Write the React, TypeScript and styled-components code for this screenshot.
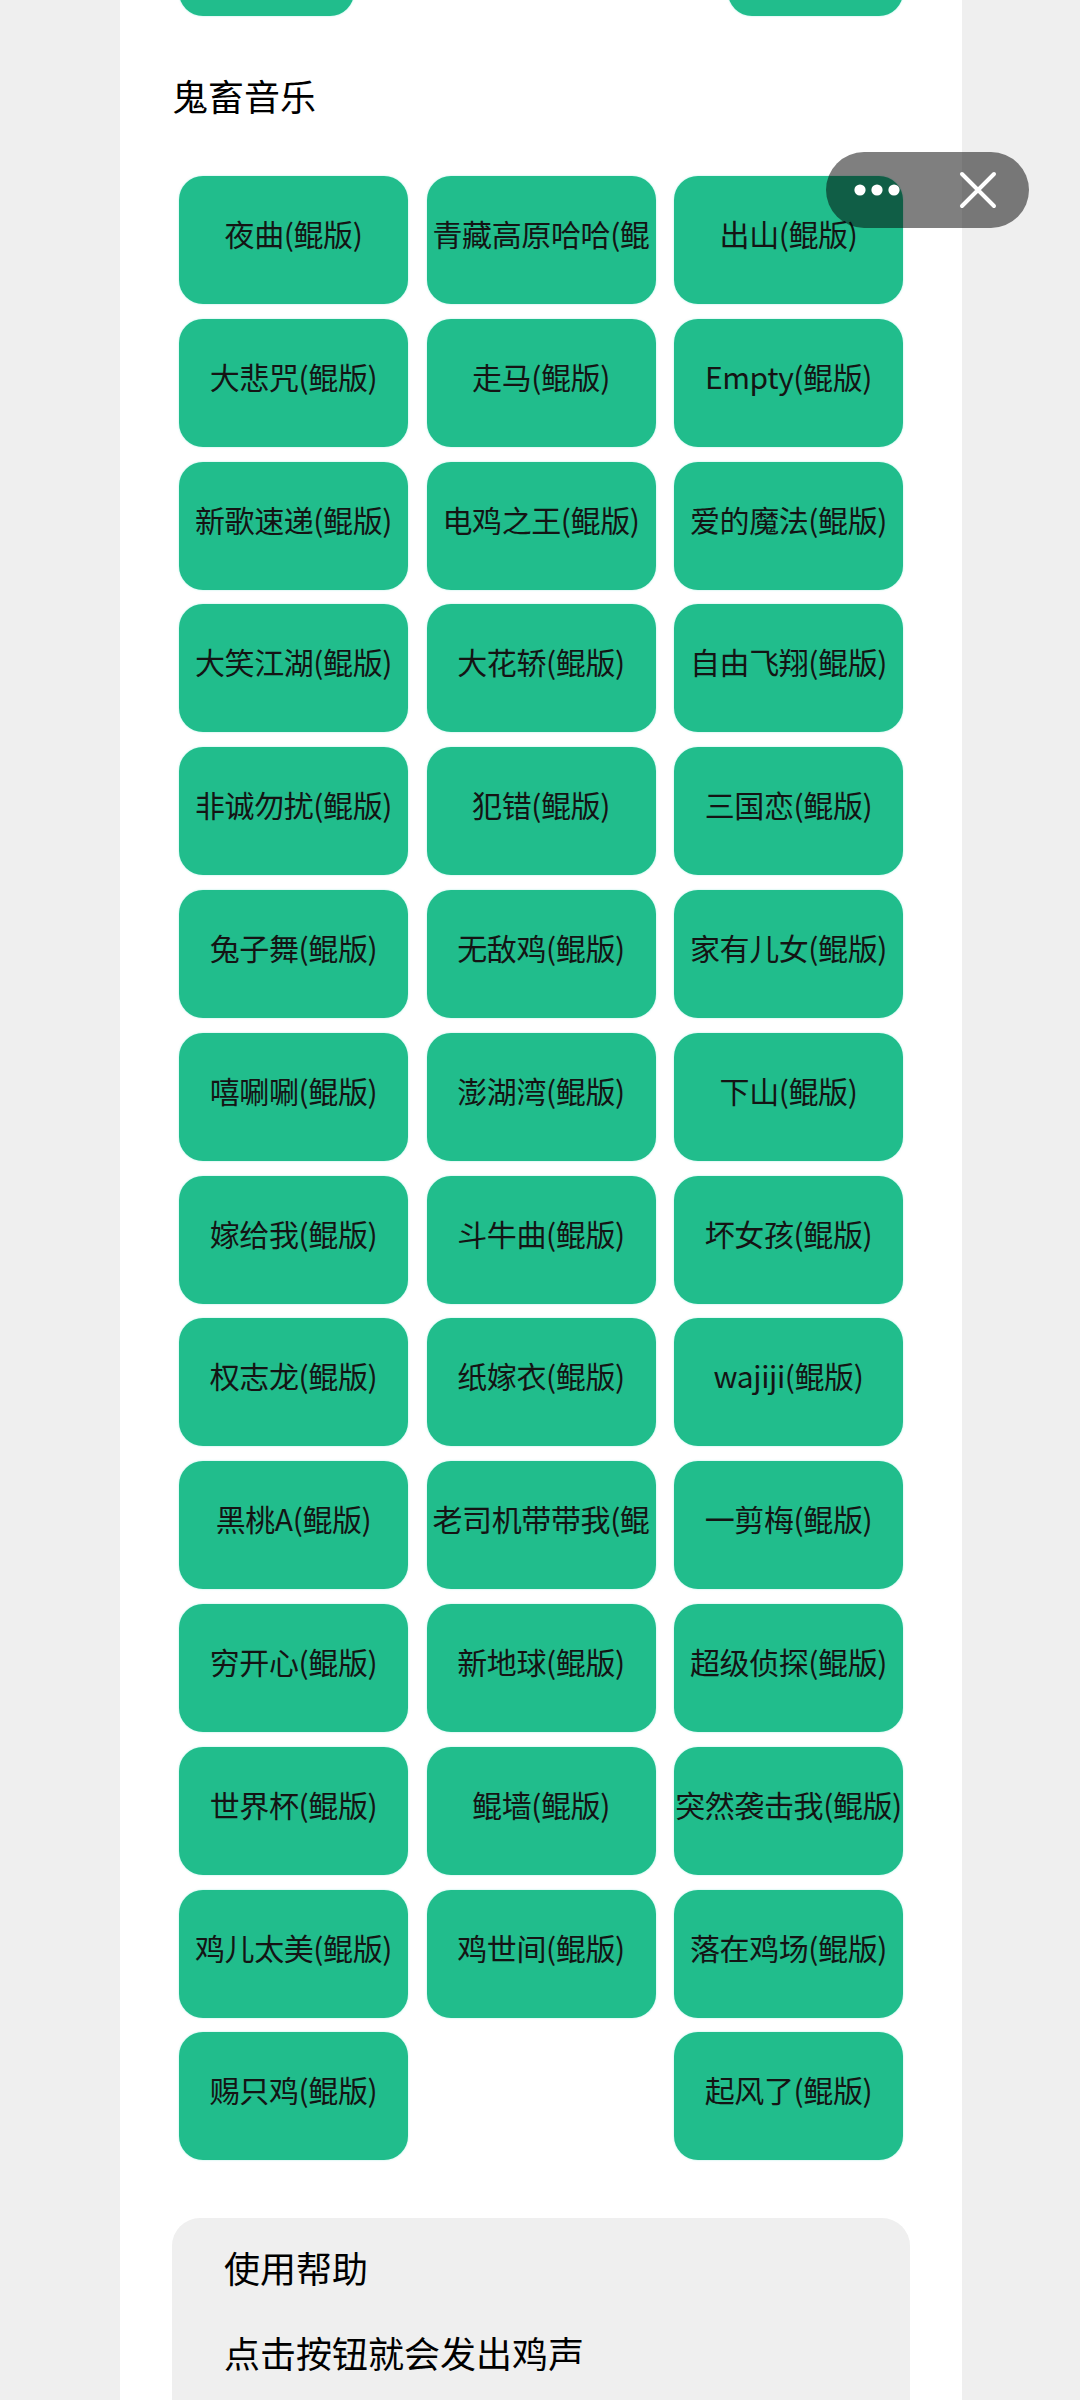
import React from "react";
import styled, { createGlobalStyle } from "styled-components";

const GlobalStyle = createGlobalStyle`
  html, body {
    margin: 0;
    padding: 0;
    background: #efefef;
    overflow: hidden;
  }
  body {
    font-family: "Noto Sans CJK SC", "Noto Sans", sans-serif;
    color: #111;
  }
`;

const Screen = styled.div`
  width: 1080px;
  height: 2400px;
  overflow: hidden;
  background: #efefef;
`;

const Panel = styled.main`
  width: 842px;
  margin: -112px 0 0 120px;
  background: #ffffff;
  padding: 0 52px 200px;
  box-sizing: border-box;
`;

const ButtonList = styled.div`
  display: flex;
  flex-wrap: wrap;
  justify-content: space-between;
  row-gap: 14.8px;
  margin: 0 7px;
`;

const SoundButton = styled.button<{ $w: number }>`
  display: block;
  width: ${(p) => p.$w}px;
  height: 128px;
  border: none;
  padding: 0;
  margin: 0;
  background: #21bd8c;
  border-radius: 24px;
  box-shadow: 0 0 2px rgba(90, 225, 200, 0.55);
  overflow: hidden;
  cursor: pointer;
`;

const Label = styled.span`
  display: block;
  height: 128px;
  overflow: hidden;
  color: #141414;
  font-family: "Noto Sans CJK SC", "Noto Sans", sans-serif;
  font-size: 30px;
  letter-spacing: -0.4px;
  line-height: 114px;
  text-align: center;
  white-space: normal;
`;

const SectionTitle = styled.h2`
  margin: 52px 0 54px;
  font-size: 36px;
  line-height: 54px;
  font-weight: 400;
  color: #000;
`;

const HelpCard = styled.section`
  margin-top: 58px;
  background: #efefef;
  border-radius: 28px;
  padding: 22px 52px 80px;
`;

const HelpTitle = styled.div`
  font-size: 36px;
  line-height: 54px;
  color: #000;
`;

const HelpText = styled.div`
  margin-top: 31px;
  font-size: 36px;
  line-height: 54px;
  color: #000;
`;

const Capsule = styled.div`
  position: fixed;
  top: 152px;
  left: 826px;
  width: 203px;
  height: 76px;
  border-radius: 38px;
  background: rgba(0, 0, 0, 0.5);
  display: flex;
  align-items: center;
`;

const CapsuleHalf = styled.div`
  flex: 1;
  height: 100%;
  display: flex;
  align-items: center;
  justify-content: center;
`;

const MoreIcon = () => (
  <svg width="48" height="14" viewBox="0 0 48 14">
    <circle cx="7" cy="7" r="5.6" fill="#fff" />
    <circle cx="24" cy="7" r="5.6" fill="#fff" />
    <circle cx="41" cy="7" r="5.6" fill="#fff" />
  </svg>
);

const CloseIcon = () => (
  <svg width="38" height="38" viewBox="0 0 38 38">
    <path
      d="M3 3 L35 35 M35 3 L3 35"
      stroke="#fff"
      strokeWidth="4"
      strokeLinecap="round"
    />
  </svg>
);

const prevItems = ["prev-a", "prev-b"];

const songs = [
  "夜曲", "青藏高原哈哈", "出山",
  "大悲咒", "走马", "Empty",
  "新歌速递", "电鸡之王", "爱的魔法",
  "大笑江湖", "大花轿", "自由飞翔",
  "非诚勿扰", "犯错", "三国恋",
  "兔子舞", "无敌鸡", "家有儿女",
  "嘻唰唰", "澎湖湾", "下山",
  "嫁给我", "斗牛曲", "坏女孩",
  "权志龙", "纸嫁衣", "wajiji",
  "黑桃A", "老司机带带我", "一剪梅",
  "穷开心", "新地球", "超级侦探",
  "世界杯", "鲲墙", "突然袭击我",
  "鸡儿太美", "鸡世间", "落在鸡场",
  "赐只鸡", "起风了",
];

export default function App() {
  return (
    <Screen>
      <GlobalStyle />
      <Panel>
        <ButtonList>
          {prevItems.map((t) => (
            <SoundButton key={t} $w={175} aria-label="上一组按钮" />
          ))}
        </ButtonList>
        <SectionTitle>鬼畜音乐</SectionTitle>
        <ButtonList>
          {songs.map((s) => (
            <SoundButton key={s} $w={229}>
              <Label>{s}(鲲版)</Label>
            </SoundButton>
          ))}
        </ButtonList>
        <HelpCard>
          <HelpTitle>使用帮助</HelpTitle>
          <HelpText>点击按钮就会发出鸡声</HelpText>
        </HelpCard>
      </Panel>
      <Capsule>
        <CapsuleHalf>
          <MoreIcon />
        </CapsuleHalf>
        <CapsuleHalf>
          <CloseIcon />
        </CapsuleHalf>
      </Capsule>
    </Screen>
  );
}
